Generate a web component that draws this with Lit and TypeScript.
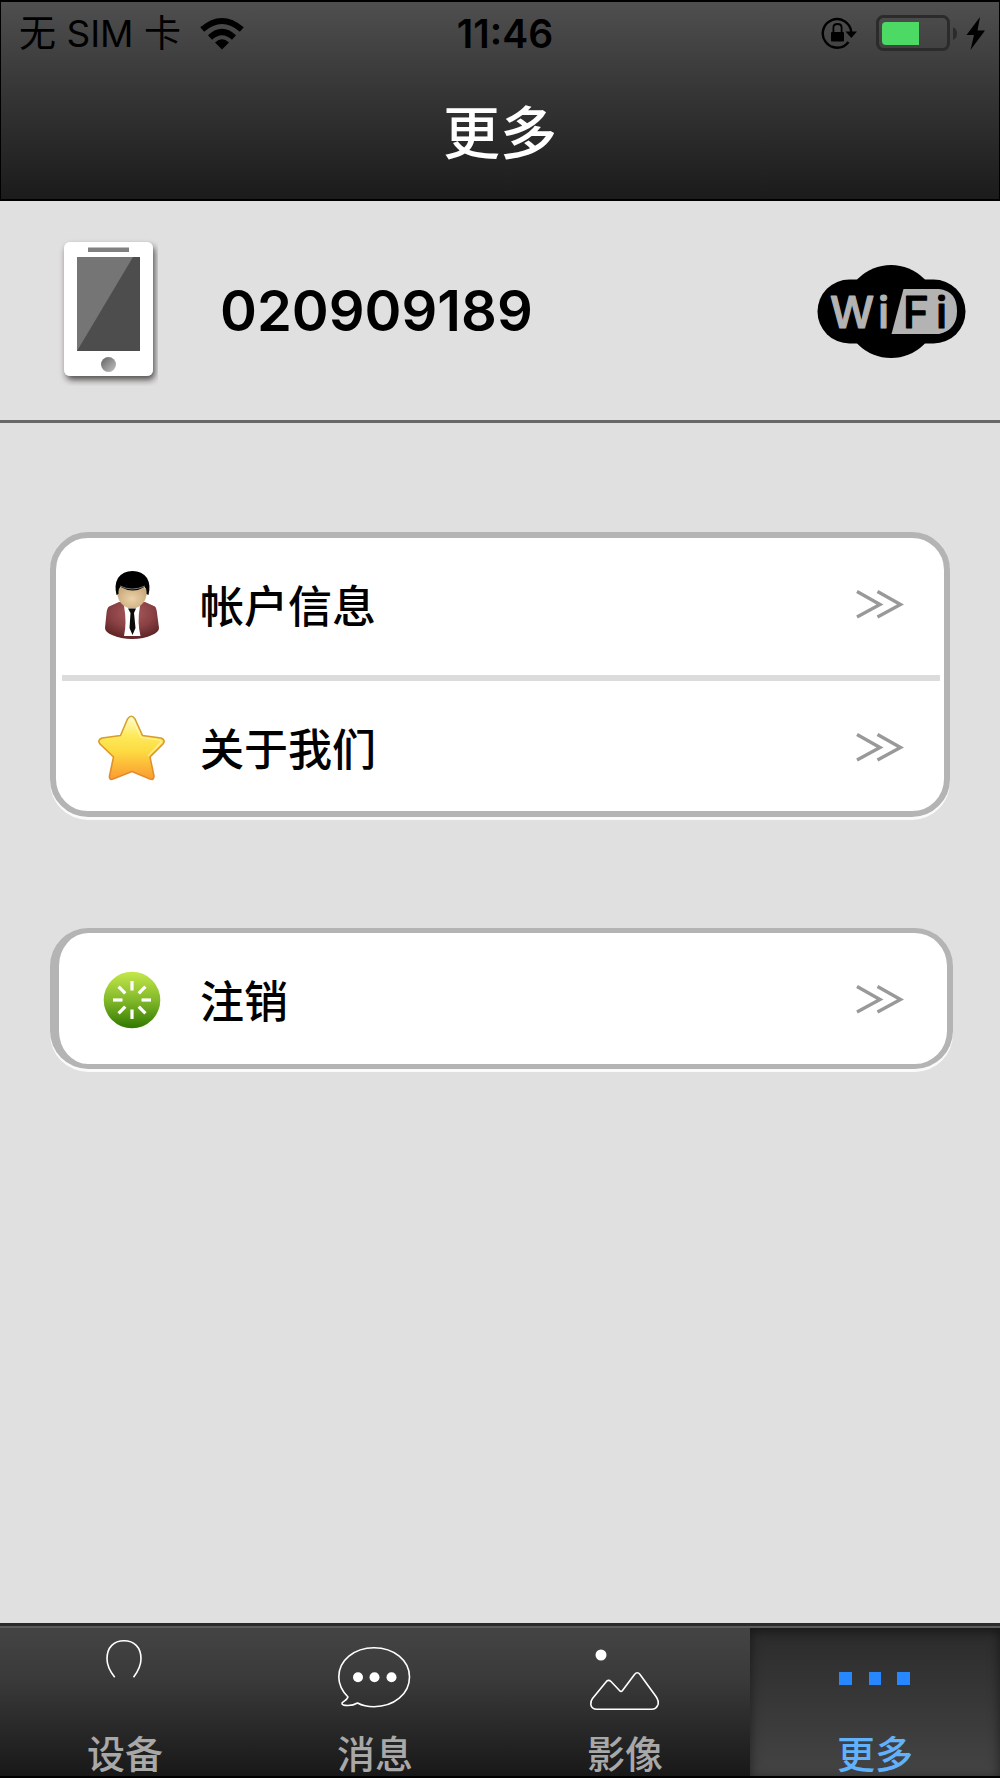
import { LitElement, html, css, svg, TemplateResult } from "lit";
import { customElement, property } from "lit/decorators.js";

const personIcon = html`<svg viewBox="0 0 70 70" aria-hidden="true">
  <defs>
    <radialGradient id="coat" cx="50%" cy="30%" r="70%">
      <stop offset="0" stop-color="#a85a5c" />
      <stop offset="0.55" stop-color="#8b4245" />
      <stop offset="1" stop-color="#5f2425" />
    </radialGradient>
    <radialGradient id="skin" cx="50%" cy="60%" r="55%">
      <stop offset="0" stop-color="#ecd2a8" />
      <stop offset="1" stop-color="#c9a97c" />
    </radialGradient>
  </defs>
  <path d="M22 32 L12 36.500 Q10 38 9.500 43 L8 58 Q8 62 15 65 Q24 69 35 69 Q47 69 55 65 Q62 62 62 58 L60 43 Q59.500 38 58 36.500 L48 32 Z" fill="url(#coat)" />
  <path d="M27 36 L43 36 Q40 52 43.500 66 L27 66 Q30 52 27 36 Z" fill="#fff" />
  <path d="M20 20 Q20 31 27 36 Q35 41 43 36 Q50 31 50 20 Q36 9 20 20 Z" fill="url(#skin)" />
  <path d="M31 38.500 L39 38.500 L37 43 L38.500 58 L35.500 65 L32.500 58 L33.500 43 Z" fill="#0b0b0b" />
  <path d="M19.500 25 Q17 15 21 8 Q26 1 35.500 1 Q45 1 50 8 Q54 15 51.500 25 L49.500 24 Q50 19 47.500 17 Q36 24 23.500 17 Q21 19 21.500 24 Z" fill="#000" />
  <path d="M23 16 Q35 22 48 16" fill="none" stroke="#777" stroke-width="1" />
</svg>`;

const starIcon = html`<svg viewBox="0 0 70 70" aria-hidden="true">
  <defs>
    <linearGradient id="gold" x1="0" y1="0" x2="0" y2="1">
      <stop offset="0" stop-color="#fffbd0" />
      <stop offset="0.3" stop-color="#fdea5c" />
      <stop offset="0.55" stop-color="#fddb42" />
      <stop offset="1" stop-color="#fb9a30" />
    </linearGradient>
    <linearGradient id="goldEdge" x1="0" y1="0" x2="0" y2="1">
      <stop offset="0" stop-color="#d0a52e" />
      <stop offset="1" stop-color="#e58a2c" />
    </linearGradient>
  </defs>
  <path d="M30.500 6 Q34.500 0.500 38 6 L45.500 22.500 L64 25 Q69 27 66 31 L53 44 L57 63 Q57 67.500 53 66 L35 58.500 L16 66 Q12 67.500 12.500 63 L16.500 44 L3 31 Q0 27 5 25 L23.500 22.500 Z"
    fill="url(#gold)" stroke="url(#goldEdge)" stroke-width="1.600" stroke-linejoin="round" />
  <path d="M32.500 8 Q34.500 4 36.500 8 L44 24.500 L62 27 Q65.500 28 63 30.500 L51 43"
    fill="none" stroke="#fff8c0" stroke-width="1.200" opacity="0.700" />
</svg>`;

const burstIcon = html`<svg viewBox="0 0 70 70" aria-hidden="true">
  <defs>
    <linearGradient id="leaf" x1="0" y1="0" x2="0" y2="1">
      <stop offset="0" stop-color="#c4e84a" />
      <stop offset="0.5" stop-color="#83b92a" />
      <stop offset="1" stop-color="#2f7800" />
    </linearGradient>
  </defs>
  <circle cx="35" cy="35" r="28.300" fill="url(#leaf)" />
  ${[0, 45, 90, 135, 180, 225, 270, 315].map(
    (a) => svg`<rect x="33.400" y="16" width="3.200" height="9.500" fill="#fff" transform="rotate(${a} 35 35)" />`
  )}
</svg>`;

const pinIcon = html`<svg viewBox="0 0 80 80" aria-hidden="true">
  <path d="M29.700 43.300 C24 36 22 30 22 25 C22 13 29 6.800 39 6.800 C49 6.800 56 13 56 25 C56 30 54 36 48.500 43.300" fill="none" stroke="#fff" stroke-width="1.600" />
</svg>`;

const bubbleIcon = html`<svg viewBox="0 0 80 80" aria-hidden="true">
  <path d="M22.500 69 C28 72 33 72.700 39 72.700 C59 72.700 74.500 60 74.500 43 C74.500 26.500 59 13.800 39 13.800 C19 13.800 3.800 26.500 3.800 43 C3.800 51 7 57 13 63 C12 66 9 67 7 69 C6.500 71 9 71.500 13 71.500 C17 71.500 20 70.500 22.500 69 Z" fill="none" stroke="#fff" stroke-width="1.600" stroke-linejoin="round" />
  <circle cx="23" cy="43.300" r="5" fill="#fff" /><circle cx="39.500" cy="43.300" r="5" fill="#fff" /><circle cx="56.500" cy="43.300" r="5" fill="#fff" />
</svg>`;

const pictureIcon = html`<svg viewBox="0 0 80 80" aria-hidden="true">
  <circle cx="16" cy="21" r="5.500" fill="#fff" />
  <path d="M7.500 64.500 L21 48 Q23.300 45 26 47.500 L34.500 56.500 Q36 58.500 37.500 56.500 L49.500 40.500 Q52.300 37 55 40.500 L71 62.500 Q74 67 73 70.500 Q71.500 75.300 66.500 75.300 H12 Q6.500 75.300 5.800 70.500 Q5.500 67 7.500 64.500 Z"
    fill="none" stroke="#fff" stroke-width="1.600" stroke-linejoin="round" />
</svg>`;

const moreIcon = html`<svg viewBox="0 0 80 80" aria-hidden="true">
  <path d="M4 38h13v13h-13z M34 38h12v13h-12z M62 38h13v13h-13z" fill="#2787ff" />
</svg>`;

interface MenuEntry { label: string; icon: TemplateResult; }
interface Tab { label: string; icon: TemplateResult; active?: boolean; }

@customElement("status-bar")
class StatusBar extends LitElement {
  static styles = css`
    :host {
      display: grid;
      grid-template-columns: 1fr auto 1fr;
      align-items: center;
      height: 64px;
      padding: 0 8px 0 18px;
      color: #000;
      font-size: 37px;
      line-height: 44px;
    }
    .carrier { display: flex; align-items: center; gap: 18px; }
    .time { font-size: 39px; font-weight: 600; }
    .wifi { display: block; width: 46px; height: 34px; }
    .right { justify-self: end; display: block; width: 170px; height: 40px; }
  `;
  render() {
    return html`
      <div class="carrier">
        <span>无 SIM 卡</span>
        <svg class="wifi" viewBox="0 0 46 34" aria-hidden="true">
          <path d="M23 32.500 L16 25.500 Q23 19 30 25.500 Z" fill="#000" />
          <path d="M11 20.500 Q23 9.500 35 20.500" fill="none" stroke="#000" stroke-width="6" />
          <path d="M3.200 12.500 Q23 -4.500 42.800 12.500" fill="none" stroke="#000" stroke-width="6" />
        </svg>
      </div>
      <time class="time">11:46</time>
      <svg class="right" viewBox="0 0 170 40" aria-hidden="true">
        <path d="M27.500 28 A14.300 14.300 0 1 1 30.300 18" fill="none" stroke="#000" stroke-width="2.400" />
        <path d="M24.500 17.500 L36 17.500 L30.300 24 Z" fill="#000" />
        <rect x="10" y="18" width="13" height="9.500" rx="1" fill="#000" />
        <path d="M12.400 18 V13.500 Q12.400 10 16.500 10 Q20.600 10 20.600 13.500 V18" fill="none" stroke="#000" stroke-width="1.800" />
        <rect x="56.500" y="2.500" width="71" height="33" rx="6" fill="none" stroke="#2b2b2b" stroke-width="3" />
        <path d="M65 8 H98 V31 H65 Q61 31 61 27 V12 Q61 8 65 8 Z" fill="#4cd964" />
        <path d="M132 13 Q136 15 136 19.500 Q136 24 132 26 Z" fill="#2b2b2b" />
        <path d="M159 3 L145.500 21 H153 L149.500 36 L164 16.500 H156.500 Z" fill="#000" />
      </svg>
    `;
  }
}

@customElement("menu-card")
class MenuCard extends LitElement {
  @property({ attribute: false }) entries: MenuEntry[] = [];
  static styles = css`
    :host { display: block; }
    .card {
      background: #fff;
      border: 6px solid #b4b4b4;
      border-radius: 38px;
      box-shadow: 0 3px 0 #fafafa;
    }
    .single {
      margin-right: -3px;
      border-width: 5px 6px 5px 9px;
    }
    .row {
      display: flex;
      align-items: center;
      width: 100%;
      height: 130px;
      padding: 3px 40px 0 41px;
      border: 0;
      background: none;
      color: #000;
      font: inherit;
      font-size: 44px;
      font-weight: 500;
      line-height: 64px;
      text-align: left;
      box-sizing: border-box;
      cursor: pointer;
    }
    .single .row { height: 131px; padding: 3px 43px 0 38px; }
    .row svg { display: block; width: 70px; height: 70px; flex: none; }
    .label { flex: 1; padding: 4px 0 0 33px; }
    .row .chevrons { width: 48px; height: 32px; }
    .divider { height: 6px; margin: 7px 4px 0 6px; border: 0; background: #dcdcdc; }
  `;
  render() {
    return html`<div class="card ${this.entries.length === 1 ? "single" : ""}">
      ${this.entries.map(
        (e, i) => html`
          ${i ? html`<hr class="divider" />` : ""}
          <button class="row" type="button">
            ${e.icon}
            <span class="label">${e.label}</span>
            <svg class="chevrons" viewBox="0 0 48 32" aria-hidden="true">
              <path d="M1 2.500 L24 15.500 L1 28 M21.500 2.500 L44.500 15.500 L21.500 28" fill="none" stroke="#999" stroke-width="3.400" />
            </svg>
          </button>
        `
      )}
    </div>`;
  }
}

@customElement("tab-bar")
class TabBar extends LitElement {
  @property({ attribute: false }) tabs: Tab[] = [];
  static styles = css`
    :host { display: block; }
    .tabs {
      display: grid;
      grid-template-columns: repeat(4, 1fr);
      border-top: 3px solid #2b2b2b;
      border-bottom: 2px solid #000;
      background: linear-gradient(#5c5c5c 0 2px, #444 2px, #3a3a3a 35%, #181818);
    }
    .tab {
      display: flex;
      flex-direction: column;
      align-items: center;
      height: 148px;
      margin-top: 2px;
      padding-top: 6px;
      box-sizing: border-box;
      color: #a8a8a8;
      font-size: 38px;
      font-weight: 500;
      line-height: 56px;
      text-decoration: none;
    }
    .tab svg { display: block; width: 80px; height: 80px; margin-bottom: 12px; flex: none; }
    .active {
      color: #61b2fa;
      background: linear-gradient(#2b2b2b, #444);
      box-shadow: inset 0 3px 12px rgba(0, 0, 0, 0.5);
    }
  `;
  render() {
    return html`<nav class="tabs">
      ${this.tabs.map(
        (t) => html`<a class="tab ${t.active ? "active" : ""}" href="#">${t.icon}<span>${t.label}</span></a>`
      )}
    </nav>`;
  }
}

@customElement("app-root")
class AppRoot extends LitElement {
  static styles = css`
    :host {
      display: flex;
      flex-direction: column;
      min-height: 100vh;
      background: #e0e0e0;
      color: #000;
      font-family: Inter, "Noto Sans CJK SC", sans-serif;
    }
    .header {
      border: 1px solid #000;
      border-width: 2px 1px;
      background: linear-gradient(#4f4f4f, #363636 45%, #1b1b1b);
    }
    .title {
      margin: 0;
      padding: 26px 0 23px;
      color: #fff;
      font-size: 57px;
      font-weight: 500;
      line-height: 84px;
      text-align: center;
    }
    .device {
      display: flex;
      align-items: center;
      height: 219px;
      padding: 0 34px 0 58px;
      border-bottom: 3px solid #686868;
    }
    .phone { display: block; width: 100px; height: 150px; }
    .number {
      flex: 1;
      margin: 0;
      padding-left: 62px;
      font-size: 56px;
      font-weight: 600;
      line-height: 68px;
    }
    .wifi-logo { display: block; width: 149px; height: 97px; }
    .wifi-text { font-family: Inter, sans-serif; font-size: 44px; font-weight: 500; }
    .content {
      flex: 1;
      display: flex;
      flex-direction: column;
      gap: 111px;
      padding: 109px 50px 48px;
    }
  `;

  private account: MenuEntry[] = [
    { label: "帐户信息", icon: personIcon },
    { label: "关于我们", icon: starIcon },
  ];
  private session: MenuEntry[] = [{ label: "注销", icon: burstIcon }];
  private tabs: Tab[] = [
    { label: "设备", icon: pinIcon },
    { label: "消息", icon: bubbleIcon },
    { label: "影像", icon: pictureIcon },
    { label: "更多", icon: moreIcon, active: true },
  ];

  render() {
    return html`
      <header class="header">
        <status-bar></status-bar>
        <h1 class="title">更多</h1>
      </header>
      <section class="device">
        <svg class="phone" viewBox="0 0 100 150" aria-hidden="true">
          <defs>
            <filter id="shade" x="-20%" y="-20%" width="140%" height="140%">
              <feDropShadow dx="2" dy="4" stdDeviation="3" flood-color="#2a2020" flood-opacity="0.75" />
            </filter>
            <linearGradient id="home" x1="0" y1="0" x2="1" y2="1">
              <stop offset="0.2" stop-color="#757575" /><stop offset="1" stop-color="#c4c4c4" />
            </linearGradient>
          </defs>
          <rect x="6" y="6" width="89" height="134" rx="6" fill="#fff" filter="url(#shade)" />
          <rect x="30" y="11.500" width="41" height="4.500" fill="#808080" />
          <rect x="19" y="21" width="63" height="94" fill="#4d4d4d" />
          <path d="M19 21 H75 L19 115 Z" fill="#757575" />
          <circle cx="50.500" cy="128.500" r="7.500" fill="url(#home)" />
        </svg>
        <h2 class="number">020909189</h2>
        <svg class="wifi-logo" viewBox="0 0 149 97" role="img" aria-label="WiFi">
          <circle cx="74" cy="49.500" r="46.500" fill="#000" />
          <rect x="0.500" y="17.500" width="148" height="64" rx="32" fill="#000" />
          <path d="M86.500 27 H122 Q140 29 140 49 Q140 68 122 72 H74.500 Z" fill="#b3b3b3" />
          <text class="wifi-text" x="13 61" y="66" fill="#b3b3b3" stroke="#b3b3b3" stroke-width="1.200" stroke-linejoin="round">Wi</text>
          <text class="wifi-text" x="86 119" y="66" fill="#000" stroke="#000" stroke-width="1.200" stroke-linejoin="round">Fi</text>
        </svg>
      </section>
      <main class="content">
        <menu-card .entries=${this.account}></menu-card>
        <menu-card .entries=${this.session}></menu-card>
      </main>
      <tab-bar .tabs=${this.tabs}></tab-bar>
    `;
  }
}
